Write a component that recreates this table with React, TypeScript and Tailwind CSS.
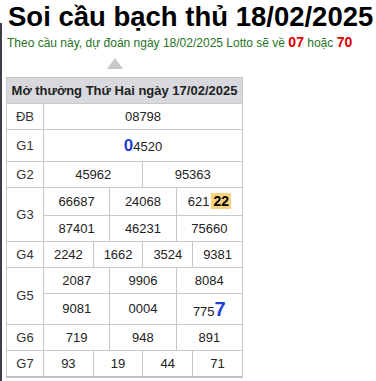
import React from 'react';

const cell = 'border border-[#c8c8c8] text-center text-[13px] text-[#222] p-0';
const label = 'border border-[#c8c8c8] text-center text-[13px] text-[#333] p-0';

function Row({ name, values, span, h = 'h-[26px]' }: { name: string; values: React.ReactNode[]; span: number; h?: string }) {
  return (
    <tr className={h}>
      <td className={label}>{name}</td>
      {values.map((v, i) => (
        <td key={i} colSpan={span} className={cell}>{v}</td>
      ))}
    </tr>
  );
}

export default function App() {
  return (
    <div className="flex min-h-screen bg-white font-['Liberation_Sans',Arial,sans-serif]">
      <div className="w-[2px] shrink-0 bg-[#3b3f48] mt-[23px]" />
      <div className="pl-[4px]">
        <h1 className="pl-[2px] pt-[1px] text-[27.5px] font-bold leading-[32px] text-black whitespace-nowrap">
          Soi cầu bạch thủ 18/02/2025
        </h1>
        <p className="pl-[1px] text-[12px] leading-[18px] text-[#267326] whitespace-nowrap">
          Theo cầu này, dự đoán ngày 18/02/2025 Lotto sẽ về{' '}
          <b className="text-[14px] text-[#e00000]">07</b> hoặc{' '}
          <b className="text-[14px] text-[#e00000]">70</b>
        </p>
        <div className="ml-[101px] mt-[6px] h-0 w-0 border-l-[8px] border-r-[8px] border-b-[11px] border-l-transparent border-r-transparent border-b-[#c8c8c8]" />
        <table className="mt-[8px] w-[237px] table-fixed border-collapse border-b-2 border-b-[#c0c0c0]">
          <colgroup>
            <col className="w-[37px]" />
            {Array.from({ length: 12 }).map((_, i) => (
              <col key={i} />
            ))}
          </colgroup>
          <thead>
            <tr className="h-[26px] bg-[#d7d9df]">
              <th colSpan={13} className="border border-[#c8c8c8] text-center text-[13px] font-bold text-[#222] p-0">
                Mở thưởng Thứ Hai ngày 17/02/2025
              </th>
            </tr>
          </thead>
          <tbody>
            <Row name="ĐB" span={12} values={['08798']} />
            <Row
              name="G1"
              span={12}
              h="h-[32px]"
              values={[
                <span>
                  <b className="text-[17px] text-[#1f3fd4]">0</b>4520
                </span>,
              ]}
            />
            <Row name="G2" span={6} values={['45962', '95363']} />
            <tr className="h-[28px]">
              <td rowSpan={2} className={label}>G3</td>
              <td colSpan={4} className={cell}>66687</td>
              <td colSpan={4} className={cell}>24068</td>
              <td colSpan={4} className={cell}>
                621<b className="ml-[2px] inline-block bg-[#fcd27f] px-[2px] text-[14px] leading-[16px] text-black">22</b>
              </td>
            </tr>
            <tr className="h-[26px]">
              <td colSpan={4} className={cell}>87401</td>
              <td colSpan={4} className={cell}>46231</td>
              <td colSpan={4} className={cell}>75660</td>
            </tr>
            <Row name="G4" span={3} values={['2242', '1662', '3524', '9381']} />
            <tr className="h-[26px]">
              <td rowSpan={2} className={label}>G5</td>
              <td colSpan={4} className={cell}>2087</td>
              <td colSpan={4} className={cell}>9906</td>
              <td colSpan={4} className={cell}>8084</td>
            </tr>
            <tr className="h-[31px]">
              <td colSpan={4} className={cell}>9081</td>
              <td colSpan={4} className={cell}>0004</td>
              <td colSpan={4} className={cell}>
                775<b className="text-[20px] text-[#1f3fd4]">7</b>
              </td>
            </tr>
            <Row name="G6" span={4} values={['719', '948', '891']} />
            <Row name="G7" span={3} values={['93', '19', '44', '71']} />
          </tbody>
        </table>
      </div>
    </div>
  );
}
